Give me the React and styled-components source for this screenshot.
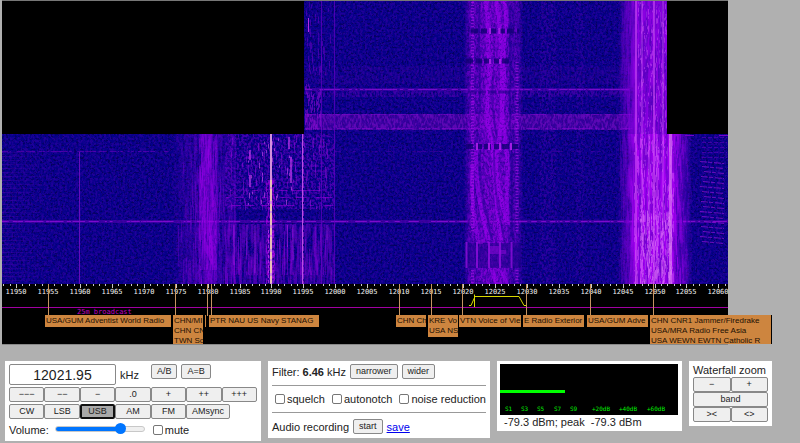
import React, { useState } from 'react';
import styled, { createGlobalStyle } from 'styled-components';


const START_KHZ = 11947.8;
const SPAN_KHZ = 113.7;
const LEFT = 2;
const WIDTH = 726;

const toX = (khz) => LEFT + ((khz - START_KHZ) / SPAN_KHZ) * WIDTH;
const toPercent = (px) => `${((px - LEFT) / WIDTH) * 100}%`;

const stations = [
  { x: 45, width: 127, lines: ['USA/GUM Adventist World Radio'] },
  { x: 173, width: 31, lines: ['CHN/MI', 'CHN CN', 'TWN So'] },
  { x: 205, width: 2, lines: [] },
  { x: 209, width: 111, lines: ['PTR NAU US Navy STANAG'] },
  { x: 396, width: 31, lines: ['CHN Ch'] },
  { x: 428, width: 31, lines: ['KRE Vo', 'USA NS'] },
  { x: 459, width: 63, lines: ['VTN Voice of Vie'] },
  { x: 523, width: 62, lines: ['E Radio Exterior'] },
  { x: 587, width: 62, lines: ['USA/GUM Adve'] },
  { x: 650, width: 122, lines: ['CHN CNR1 Jammer/Firedrake', 'USA/MRA Radio Free Asia', 'USA WEWN EWTN Catholic R'] },
];

const stationMarks = [48, 175, 207, 211, 399, 431, 462, 526, 590, 653];
const steps = ['−−−', '−−', '−', '.0', '+', '++', '+++'];
const modes = ['CW', 'LSB', 'USB', 'AM', 'FM', 'AMsync'];
const meterMarks = [
  [505, 'S1'], [521, 'S3'], [537, 'S5'], [554, 'S7'], [570, 'S9'],
  [592, '+20dB'], [619, '+40dB'], [647, '+60dB'],
];

// small seeded generator, so the waterfall is the same on every render
const makeRandom = (seed) => {
  let s = seed;
  return () => {
    s = (s * 16807) % 2147483647;
    return s / 2147483647;
  };
};

const streaks = (seed, count, x0, x1, y0, y1, min, max) => {
  const random = makeRandom(seed);
  let d = '';
  for (let i = 0; i < count; i++) {
    const x = Math.floor(x0 + random() * (x1 - x0)) + 0.5;
    const y = y0 + random() * (y1 - y0);
    const h = Math.min(min + random() * (max - min), y1 - y);
    d += `M${x} ${y.toFixed(1)}v${h.toFixed(1)}`;
  }
  return d;
};

const dashes = (seed, count, x0, x1, y, max) => {
  const random = makeRandom(seed);
  let d = '';
  for (let i = 0; i < count; i++) {
    d += `M${(x0 + random() * (x1 - x0)).toFixed(1)} ${y}h${(1 + random() * max).toFixed(1)}`;
  }
  return d;
};

const Gradient = ({ id, color, x1, x2, stops }) => (
  <linearGradient id={id} gradientUnits="userSpaceOnUse" x1={x1} x2={x2} y1="0" y2="0">
    {stops.map(([x, opacity]) => (
      <stop key={x} offset={(x - x1) / (x2 - x1)} stopColor={color} stopOpacity={opacity} />
    ))}
  </linearGradient>
);

const Noise = ({ id, frequency, seed, gain, offset }) => (
  <filter id={id} filterUnits="userSpaceOnUse" x="2" y="1" width="726" height="283" colorInterpolationFilters="sRGB">
    <feTurbulence type="fractalNoise" baseFrequency={frequency} numOctaves="2" seed={seed} />
    <feColorMatrix values={`0 0 0 0 0  0 0 0 0 0  0 0 0 0 0  ${gain} 0 0 0 ${offset}`} result="noise" />
    <feComposite in="SourceGraphic" in2="noise" operator="in" />
  </filter>
);

const Waterfall = () => (
  <WaterfallSvg viewBox="2 1 726 283" preserveAspectRatio="none" role="img" aria-label="Waterfall">
    <defs>
      <Noise id="grain" frequency="0.43 0.37" seed="3" gain="4" offset="-1.6" />
      <Noise id="specks" frequency="0.47" seed="11" gain="6" offset="-3.3" />
      <Noise id="rain" frequency="0.35 0.035" seed="7" gain="4" offset="-1.4" />
      <Noise id="fine" frequency="0.47 0.21" seed="21" gain="5" offset="-2.1" />
      <Gradient id="voice" color="#9c00f0" x1={172} x2={236} stops={[[172, 0], [184, 0.3], [194, 0.4], [202, 0.8], [208, 1], [213, 0.9], [220, 0.4], [236, 0.3]]} />
      <Gradient id="data" color="#8400d8" x1={464} x2={523} stops={[[464, 0], [469, 0.45], [473, 0.8], [476, 0.5], [483, 0.8], [497, 0.9], [507, 0.75], [511, 0.35], [517, 0.5], [523, 0]]} />
      <Gradient id="upper" color="#8e00e4" x1={618} x2={668} stops={[[618, 0], [625, 0.3], [632, 0.6], [635, 0.95], [650, 0.85], [668, 0.95]]} />
      <Gradient id="lower" color="#a400f2" x1={618} x2={692} stops={[[618, 0], [628, 0.4], [634, 0.95], [672, 1], [679, 0.6], [686, 0.3], [692, 0]]} />
      <Gradient id="fringe" color="#5600b4" x1={2} x2={100} stops={[[2, 0.8], [20, 0.4], [40, 0.1], [100, 0]]} />
    </defs>

    <rect x="2" y="1" width="726" height="283" fill="#050088" />
    <rect x="2" y="1" width="726" height="283" fill="#3c00ac" opacity="0.5" filter="url(#grain)" />
    <rect x="2" y="1" width="726" height="283" fill="#000050" opacity="0.7" filter="url(#specks)" />
    <rect x="305" y="66" width="325" height="18" fill="#4a00ac" opacity="0.3" filter="url(#fine)" />
    <rect x="540" y="1" width="16" height="283" fill="#4400b0" opacity="0.35" filter="url(#grain)" />
    <rect x="576" y="1" width="8" height="283" fill="#4400b0" opacity="0.25" filter="url(#grain)" />

    {/* horizontal interference */}
    <rect x="305" y="88" width="325" height="3" fill="#6600be" opacity="0.45" />
    <path d={dashes(31, 150, 305, 628, 89.5, 4)} stroke="#9010dc" opacity="0.7" />
    <rect x="305" y="91" width="325" height="6" fill="#5200b4" opacity="0.6" filter="url(#fine)" />
    <rect x="305" y="114" width="325" height="16" fill="#4c00a8" opacity="0.6" />
    <rect x="305" y="114" width="325" height="16" fill="#8410cc" opacity="0.5" filter="url(#fine)" />
    <path d={dashes(8, 90, 305, 628, 114.5, 5)} stroke="#8808d0" opacity="0.5" />
    <path d={dashes(9, 90, 305, 628, 128.5, 5)} stroke="#8808d0" opacity="0.6" />
    <path d={dashes(10, 60, 2, 165, 151.5, 4)} stroke="#6c00c0" opacity="0.6" />
    <path d={dashes(12, 40, 335, 600, 151.5, 4)} stroke="#5400b0" opacity="0.5" />
    <path d="M2 221.5H728" stroke="#5c00b4" strokeWidth="3" opacity="0.55" />
    <path d={dashes(13, 260, 2, 724, 221.5, 4)} stroke="#9810e0" opacity="0.7" />
    {Array.from({ length: 34 }, (_, i) => (
      <rect key={i} x="2" y={152 + i * 4} width="40" height="1" fill="url(#fringe)" opacity="0.5" />
    ))}

    {/* carriers on the left half */}
    <path d="M79.5 152V284" stroke="#7c10c8" opacity="0.8" />
    <g>
      <rect x="172" y="134" width="64" height="150" fill="url(#voice)" opacity="0.15" />
      <rect x="172" y="134" width="64" height="150" fill="url(#voice)" opacity="0.6" filter="url(#rain)" />
      <path d="M202 134L213 134L211 175L217 210L216 240L212 266L205 250L201 215L200 180Z" fill="#9400e4" opacity="0.4" />
      <path d={streaks(41, 90, 199, 217, 134, 270, 8, 50)} stroke="#a800ee" opacity="0.35" />
      <path d={streaks(42, 80, 178, 235, 160, 284, 6, 40)} stroke="#8a00dc" opacity="0.3" />
      <path d={streaks(43, 160, 198, 219, 134, 284, 1, 6)} stroke="#3c00a8" opacity="0.4" />
    </g>
    <rect x="225" y="134" width="110" height="75" fill="#7a00d4" opacity="0.4" filter="url(#grain)" />
    <rect x="225" y="224" width="110" height="60" fill="#8000d4" opacity="0.5" filter="url(#rain)" />
    <path d={streaks(51, 90, 230, 330, 135, 210, 2, 12)} stroke="#a810e4" opacity="0.4" />
    <path d={streaks(52, 60, 234, 332, 225, 275, 8, 45)} stroke="#a000e6" opacity="0.35" />
    <path d={streaks(53, 30, 248, 294, 135, 205, 2, 6)} stroke="#d050f0" opacity="0.6" />
    <path d={dashes(54, 12, 230, 320, 190.5, 12) + dashes(55, 12, 226, 325, 197.5, 12) + dashes(56, 14, 232, 325, 205.5, 12)} stroke="#a400e4" opacity="0.5" />
    <path d="M234 225v40M247 225v30M255 225v48M287.5 225v22M293 225v35M327 225v15" stroke="#b41cec" opacity="0.6" />
    <path d="M289 137v12M291 157v26M250 150v10M250 175v12" stroke="#d03cf4" strokeWidth="2" opacity="0.6" />
    <rect x="266" y="180" width="9" height="104" fill="#b000e8" opacity="0.65" filter="url(#fine)" />
    <path d="M268.5 230V284M273 225V284" stroke="#c83cf0" strokeDasharray="3 2" opacity="0.7" />
    <path d="M271 134V284" stroke="#d490dc" strokeWidth="2" />
    <path d="M271 180V284" stroke="#f0ccb0" strokeWidth="2" strokeDasharray="7 2 12 3" opacity="0.8" />
    <path d="M302.5 134V284" stroke="#b850e0" strokeWidth="1" />
    <path d="M303.5 134V284" stroke="#a81cdc" strokeDasharray="5 2" opacity="0.6" />
    <path d={streaks(57, 50, 305, 334, 2, 75, 2, 9)} stroke="#6c00c4" opacity="0.5" />
    <path d={streaks(58, 70, 305, 322, 84, 130, 2, 7)} stroke="#8c0cd4" opacity="0.55" />
    <path d="M308.5 18v14" stroke="#b42ce4" />
    <path d="M321.5 1V284M334.5 1V284" stroke="#6400c0" opacity="0.7" />

    {/* slanting data signal */}
    <rect x="464" y="1" width="59" height="283" fill="url(#data)" opacity="0.65" />
    <rect x="464" y="1" width="59" height="283" fill="url(#data)" filter="url(#fine)" />
    <g fill="none" stroke="#9c00ee" strokeWidth="4" opacity="0.6">
      <path d="M485 1C490 20 487 40 489 60S483 105 490 135S493 190 501 240" />
      <path d="M496 1C501 22 499 42 503 63S498 100 505 140S503 190 508 225" />
      <path d="M504 1C510 20 502 40 502 70S504 120 498 145S502 200 506 222" />
      <path d="M476 150C475 180 480 210 488 240M472 165C471 190 473 215 478 240M492 270L497 284M501 270L507 284" />
    </g>
    <g fill="none" stroke="#18008c" strokeWidth="2" opacity="0.4">
      <path d="M480 5C476 50 484 90 478 125M480 150C478 190 489 220 492 240" />
      <path d="M494 150C494 190 498 210 504 238M510 5V130M512 152V238" />
      <path d="M494 70C490 100 494 120 497 138" />
    </g>
    <rect x="466" y="1" width="55" height="283" fill="#1c008c" opacity="0.4" filter="url(#specks)" />
    <path d="M472.5 2V232M517 62V232M472.5 270V284M517 270V284" stroke="#a414e4" strokeWidth="3" strokeDasharray="1 2" opacity="0.6" />
    <path d="M471 31H519M466 61H511M466 146.5H521" stroke="#0c0070" strokeWidth="5" strokeDasharray="7 3 6 2" opacity="0.75" />
    <path d="M468 92H510" stroke="#20008c" strokeWidth="3" strokeDasharray="8 2" opacity="0.6" />
    <rect x="465" y="243" width="56" height="25" fill="#140084" opacity="0.5" />
    <path d="M490 28v6M499.5 28v6M490 59v5M500 59v5M477 143v7M489 143v7M500 143v7M511 143v7" stroke="#b020ec" strokeWidth="2" opacity="0.9" />
    <path d="M466.5 242v26M477 242v26M489 242v26M500 242v26M511.5 242v26" stroke="#a010e8" strokeWidth="2" opacity="0.7" />
    <path d="M489 252h17M489 248h10M477 242h6" stroke="#9008dc" strokeWidth="4" opacity="0.5" />

    {/* strong broadcast signal */}
    <rect x="618" y="1" width="50" height="133" fill="url(#upper)" opacity="0.75" />
    <rect x="618" y="134" width="74" height="150" fill="url(#lower)" opacity="0.75" />
    <rect x="618" y="1" width="50" height="133" fill="url(#upper)" filter="url(#rain)" />
    <rect x="618" y="134" width="74" height="150" fill="url(#lower)" filter="url(#rain)" />
    <path d={streaks(60, 240, 638, 668, 1, 134, 1, 6)} stroke="#d45cf8" opacity="0.4" />
    <path d={streaks(61, 420, 634, 674, 134, 284, 1, 9)} stroke="#e06cfc" opacity="0.4" />
    <path d={streaks(66, 260, 640, 672, 210, 284, 1, 9)} stroke="#e890f8" opacity="0.4" />
    <path d={streaks(62, 240, 637, 668, 1, 150, 2, 6)} stroke="#4a00bc" opacity="0.4" />
    <path d={streaks(67, 160, 637, 680, 134, 284, 1, 5)} stroke="#6000cc" opacity="0.4" />
    <path d={streaks(63, 110, 620, 634, 1, 284, 6, 30)} stroke="#6c00cc" opacity="0.3" />
    <path d={streaks(64, 80, 676, 690, 134, 284, 4, 24)} stroke="#20009c" opacity="0.4" />
    <path d="M636 1V284M654 1V284" stroke="#cc4cf4" strokeWidth="2" opacity="0.6" />
    <path d="M642 1V284M663 1V284M649 134V284M657 134V284" stroke="#d868f8" opacity="0.6" />
    <path d="M670.5 134V284" stroke="#e080f4" strokeWidth="3" opacity="0.65" />
    <path d="M639.5 1V284M646 1V284M660 1V284M667 134V284" stroke="#6400d0" opacity="0.5" />
    {Array.from({ length: 17 }, (_, i) => (
      <path key={i} d={`M${700 + ((i * 7) % 5)} ${161.5 + i * 5}l${24 - ((i * 7) % 5)} 2`} stroke="#9c14d8" strokeDasharray="7 1 4 2" opacity="0.65" />
    ))}
    <path d="M685 135.5H694M719 135.5H728" stroke="#7800c8" />
    {Array.from({ length: 5 }, (_, i) => (
      <path key={i} d={`M702 ${137.5 + i * 5}h25`} stroke="#6000bc" strokeDasharray="4 2" opacity="0.6" />
    ))}

    <rect x="2" y="1" width="302" height="133" fill="#000" />
    <rect x="667" y="1" width="61" height="133" fill="#000" />
  </WaterfallSvg>
);

const Ruler = () => {
  const ticks = Array.from({ length: 114 }, (_, i) => 11948 + i);
  const labels = ticks.filter((khz) => khz % 5 === 0);

  return (
    <RulerSvg viewBox="2 284 726 60" preserveAspectRatio="none" role="img" aria-label="Frequency scale">
      {ticks.map((khz) => (
        <path key={khz} d={`M${Math.round(toX(khz)) + 0.5} 284v${khz % 5 === 0 ? 4 : 2}`} stroke="#c8c8c8" />
      ))}
      <rect x="2" y="307" width="726" height="1" fill="#a000a0" />
      {labels.map((khz) => (
        <ScaleText key={khz} x={Math.round(toX(khz))} y="294">{khz}</ScaleText>
      ))}
      <BandText x="77" y="314">25m broadcast</BandText>
      {stationMarks.map((x) => (
        <path key={x} d={`M${x + 0.5} 284V316`} stroke="#c69462" />
      ))}
      <path d="M469 305.5H471L475 296.5H519L524 305.5H526M474.5 294.5V307" fill="none" stroke="#d8d800" />
    </RulerSvg>
  );
};

const App = () => {
  const [frequency, setFrequency] = useState('12021.95');
  const [mode, setMode] = useState('USB');
  const [volume, setVolume] = useState(77);

  return (
    <>
      <GlobalStyle />
      <Display>
        <Waterfall />
        <Scale>
          <Ruler />
          {stations.map((station) => (
            <Station key={station.x} style={{ left: toPercent(station.x), width: `${(station.width / WIDTH) * 100}%` }}>
              {station.lines.map((line) => <div key={line}>{line}</div>)}
            </Station>
          ))}
        </Scale>
      </Display>

      <Controls>
        <TuningPanel>
          <FrequencyRow>
            <FrequencyInput id="frequency" value={frequency} onChange={(e) => setFrequency(e.target.value)} />
            <label htmlFor="frequency">kHz</label>
            <VfoButtons>
              <Button>A/B</Button>
              <Button>A=B</Button>
            </VfoButtons>
          </FrequencyRow>
          <ButtonRow>
            {steps.map((step) => <CellButton key={step}>{step}</CellButton>)}
          </ButtonRow>
          <ButtonRow>
            {modes.map((name) => (
              <CellButton key={name} $wide={name === 'AMsync'} $active={name === mode} onClick={() => setMode(name)}>
                {name}
              </CellButton>
            ))}
          </ButtonRow>
          <VolumeRow>
            <label htmlFor="volume">Volume:</label>
            <Slider id="volume" type="range" $value={volume} value={volume} onChange={(e) => setVolume(e.target.value)} />
            <CheckLabel><Checkbox type="checkbox" />mute</CheckLabel>
          </VolumeRow>
        </TuningPanel>

        <FilterPanel>
          <Row>
            <span>Filter: <b>6.46</b> kHz</span>
            <Button>narrower</Button>
            <Button>wider</Button>
          </Row>
          <Divider />
          <CheckRow>
            <CheckLabel><Checkbox type="checkbox" />squelch</CheckLabel>
            <CheckLabel><Checkbox type="checkbox" />autonotch</CheckLabel>
            <CheckLabel><Checkbox type="checkbox" />noise reduction</CheckLabel>
          </CheckRow>
          <Divider />
          <Row>
            <span>Audio recording</span>
            <Button>start</Button>
            <SaveLink href="#save">save</SaveLink>
          </Row>
        </FilterPanel>

        <MeterPanel>
          <MeterSvg viewBox="500 364 178 51" role="img" aria-label="Signal strength">
            <rect x="500" y="364" width="178" height="51" fill="#000" />
            <rect x="500" y="390" width="65" height="3" fill="#00ff00" />
            {meterMarks.map(([x, label]) => <MeterText key={label} x={x} y="411">{label}</MeterText>)}
          </MeterSvg>
          <MeterValue>-79.3 dBm; peak&nbsp; -79.3 dBm</MeterValue>
        </MeterPanel>

        <ZoomPanel>
          <div>Waterfall zoom</div>
          <ZoomGrid>
            <Button>−</Button>
            <Button>+</Button>
            <BandButton>band</BandButton>
            <Button>&gt;&lt;</Button>
            <Button>&lt;&gt;</Button>
          </ZoomGrid>
        </ZoomPanel>
      </Controls>
    </>
  );
};

const GlobalStyle = createGlobalStyle`
  * {
    box-sizing: border-box;
  }

  body {
    margin: 0;
    background: #b0b0b0;
    color: #222;
    font: 11px/14px "Liberation Sans", Arial, sans-serif;
  }
`;

const Display = styled.div`
  margin: 0 72px 0 2px;
  border-top: 1px solid #777;
  border-bottom: 1px solid #888;
`;

const WaterfallSvg = styled.svg`
  display: block;
  width: 100%;
  height: 283px;
`;

const Scale = styled.div`
  position: relative;
  height: 60px;
  background: #000;
`;

const RulerSvg = styled.svg`
  display: block;
  width: 100%;
  height: 60px;
`;

const ScaleText = styled.text`
  fill: #f0f0f0;
  font: 7px "DejaVu Sans Mono", monospace;
  text-anchor: middle;
`;

const BandText = styled.text`
  fill: #c000c0;
  font: 7px "DejaVu Sans Mono", monospace;
`;

const Station = styled.div`
  position: absolute;
  top: 31px;
  min-height: 12px;
  max-height: 29px;
  padding: 1px 0 1px 1px;
  overflow: hidden;
  border-right: 1px solid #000;
  background: #cd853f;
  color: #1c1004;
  font-size: 8px;
  line-height: 10px;
  white-space: nowrap;
`;

const Controls = styled.main`
  display: flex;
  align-items: flex-start;
  gap: 7px;
  margin: 16px 0 0 5px;
`;

const Panel = styled.section`
  background: #fff;
`;

const TuningPanel = styled(Panel)`
  width: 256px;
  padding: 3px 4px 2px;
`;

const FilterPanel = styled(Panel)`
  width: 222px;
  padding: 3px 4px 4px;
`;

const MeterPanel = styled(Panel)`
  width: 185px;
  padding: 3px 4px 2px 3px;
`;

const ZoomPanel = styled(Panel)`
  width: 83px;
  padding: 2px 4px 4px;
  white-space: nowrap;
`;

const Row = styled.div`
  display: flex;
  align-items: center;
  gap: 4px;
  height: 15px;
`;

const FrequencyRow = styled.div`
  display: flex;
  align-items: center;
  gap: 4px;
  height: 21px;
  margin-bottom: 2px;
`;

const FrequencyInput = styled.input`
  width: 107px;
  height: 21px;
  padding: 0;
  border: 1px solid #888;
  border-radius: 2px;
  color: #222;
  font: 14px "Liberation Sans", Arial, sans-serif;
  text-align: center;
`;

const VfoButtons = styled.div`
  display: flex;
  align-self: flex-start;
  gap: 4px;
  margin-left: 8px;
`;

const Button = styled.button`
  height: 15px;
  padding: 0 5px;
  border: 1px solid #888;
  border-radius: 2px;
  background: #efefef;
  color: #222;
  font: 9px/11px "Liberation Sans", Arial, sans-serif;
`;

const ButtonRow = styled.div`
  display: flex;
  margin-bottom: 2px;
`;

const CellButton = styled(Button)`
  flex: 0 0 ${({ $wide }) => ($wide ? '44px' : 'calc(100% / 7)')};
  padding: 0;
  ${({ $active }) => $active && `
    border: 2px solid #111;
    background: #a9a9a9;
  `}
`;

const VolumeRow = styled.div`
  display: flex;
  align-items: center;
  height: 18px;
`;

const Slider = styled.input`
  width: 90px;
  height: 10px;
  margin: 0 8px 2px 6px;
  appearance: none;
  background: transparent;

  &::-webkit-slider-runnable-track {
    height: 6px;
    border: 1px solid #c8c8c8;
    border-radius: 3px;
    background: linear-gradient(to right, #0075ff ${({ $value }) => $value}%, #efefef ${({ $value }) => $value}%);
  }

  &::-webkit-slider-thumb {
    width: 11px;
    height: 11px;
    margin-top: -4px;
    appearance: none;
    border-radius: 50%;
    background: #0075ff;
  }
`;

const CheckRow = styled.div`
  display: flex;
  align-items: center;
  justify-content: space-between;
  height: 14px;
  padding-left: 3px;
  white-space: nowrap;
`;

const CheckLabel = styled.label`
  display: flex;
  align-items: center;
  gap: 2px;
`;

const Checkbox = styled.input`
  width: 10px;
  height: 10px;
  margin: 0;
  appearance: none;
  border: 1px solid #767676;
  border-radius: 2px;
  background: #fff;

  &:checked {
    background: #0075ff;
  }
`;

const Divider = styled.hr`
  height: 1px;
  margin: 6px 0;
  border: 0;
  background: #999;
`;

const SaveLink = styled.a`
  color: #0000ee;
`;

const MeterSvg = styled.svg`
  display: block;
  width: 100%;
`;

const MeterText = styled.text`
  fill: #00f000;
  font: 6px "DejaVu Sans Mono", monospace;
`;

const MeterValue = styled.div`
  padding-left: 4px;
`;

const ZoomGrid = styled.div`
  display: grid;
  grid-template-columns: 1fr 1fr;
`;

const BandButton = styled(Button)`
  grid-column: span 2;
`;

export default App;
